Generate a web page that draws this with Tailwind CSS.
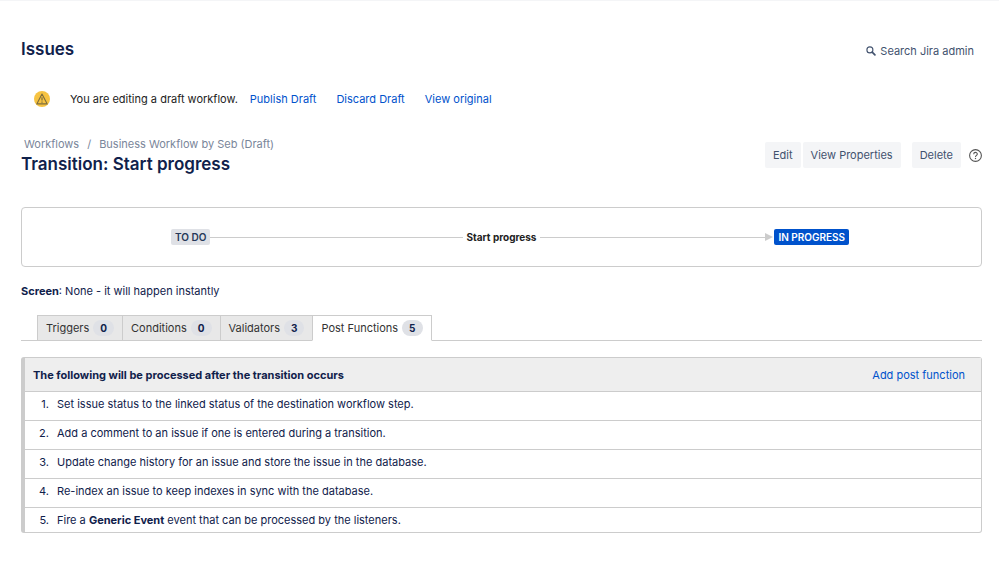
<!DOCTYPE html>
<html lang="en">
  <head>
    <meta charset="UTF-8" />
    <meta name="viewport" content="width=device-width, initial-scale=1.0" />
    <title>Transition: Start progress - Issues</title>
    <script src="https://cdn.jsdelivr.net/npm/@tailwindcss/browser@4"></script>
  </head>
  <body
    class="min-h-screen border-t border-[#f4f5f7] bg-white font-['Inter',sans-serif] text-[11px] leading-4 text-[#10214b]"
  >
    <header class="flex items-end justify-between pt-9 pr-[25px] pl-[21px]">
      <h1 class="text-[17px] leading-6 font-semibold">Issues</h1>
      <button type="button" class="flex items-center gap-1 pb-[2px] text-[#42526e]">
        <svg class="size-[10px]" viewBox="0 0 10 10" fill="none" stroke="currentColor">
          <circle cx="3.9" cy="3.9" r="3" stroke-width="1.1" />
          <path d="M6.2 6.2 8.9 8.9" stroke-width="1.7" stroke-linecap="round" />
        </svg>
        Search Jira admin
      </button>
    </header>

    <main class="pr-[17px] pl-[21px]">
      <!-- Draft notice -->
      <div class="mt-[30px] flex items-center pl-[13px]">
        <svg class="size-4" viewBox="0 0 16 16" fill="none">
          <circle cx="8" cy="8" r="8" fill="#f6c342" />
          <path d="M8 3 13.2 12.9H2.8Z" stroke="#7d6d3c" stroke-width="1.1" stroke-linejoin="round" />
          <path d="M8 6.2V9.6M8 10.6V11.8" stroke="#7d6d3c" stroke-width="1.2" />
        </svg>
        <p class="ml-5 text-[#222222]">You are editing a draft workflow.</p>
        <a href="#publish" class="ml-3 text-[#0052cc]">Publish Draft</a>
        <a href="#discard" class="ml-5 text-[#0052cc]">Discard Draft</a>
        <a href="#original" class="ml-5 text-[#0052cc]">View original</a>
      </div>

      <!-- Page title and actions -->
      <div class="mt-[29px] flex items-center justify-between">
        <div>
          <nav aria-label="Breadcrumb" class="flex gap-2 pl-[3px] text-[#7a869a]">
            <a href="#workflows">Workflows</a>
            <span>/</span>
            <a href="#workflow">Business Workflow by Seb (Draft)</a>
          </nav>
          <h2 class="text-[17px] leading-6 font-semibold">Transition: Start progress</h2>
        </div>
        <div class="flex items-center pb-[2px] text-[#42526e]">
          <button type="button" class="h-[26px] rounded-[2px] bg-[#f4f5f7] px-2">Edit</button>
          <button type="button" class="ml-[2px] h-[26px] rounded-[2px] bg-[#f4f5f7] px-2">
            View Properties
          </button>
          <button type="button" class="ml-[11px] h-[26px] rounded-[2px] bg-[#f4f5f7] px-2">
            Delete
          </button>
          <button type="button" aria-label="Help" class="ml-2 text-[#555555]">
            <svg class="size-[13px]" viewBox="0 0 13 13" fill="none" stroke="currentColor">
              <circle cx="6.5" cy="6.5" r="5.9" stroke-width="1.1" />
              <path d="M4.7 5.2C4.7 2.8 8.3 2.9 8.3 5 8.3 6.4 6.5 6.3 6.5 8" stroke-width="1.1" />
              <path d="M6.5 8.9V10.1" stroke-width="1.2" />
            </svg>
          </button>
        </div>
      </div>

      <!-- Transition diagram -->
      <div
        class="mt-[31px] grid h-[60px] grid-cols-[1fr_auto_1fr] items-center rounded-[4px] border border-[#cccccc] text-[10px]"
      >
        <div class="flex items-center pl-[149px]">
          <span class="rounded-[2px] bg-[#dfe1e6] px-1 font-semibold text-[#253858]">TO DO</span>
          <span class="h-px flex-1 bg-[#cccccc]"></span>
        </div>
        <span class="px-1 font-bold text-[#222222]">Start progress</span>
        <div class="flex items-center pr-[132px]">
          <span class="h-px flex-1 bg-[#cccccc]"></span>
          <svg class="h-2 w-[9px]" viewBox="0 0 9 8" fill="#cccccc">
            <path d="M0 0 8 4 0 8Z" />
          </svg>
          <span class="rounded-[2px] bg-[#0052cc] px-1 font-semibold text-white">IN PROGRESS</span>
        </div>
      </div>

      <p class="mt-4"><strong class="font-bold">Screen</strong>: None - it will happen instantly</p>

      <!-- Tabs -->
      <div role="tablist" class="mt-4 flex border-b border-[#cccccc] pl-4 text-[#333333]">
        <button
          type="button"
          role="tab"
          class="-mb-px flex h-[26px] items-center gap-1 border-y border-l border-[#cccccc] bg-[#e8e8e8] px-2"
        >
          Triggers
          <span class="rounded-full bg-[#dfe1e6] px-[7px] text-[10px] font-bold text-[#10214b]">0</span>
        </button>
        <button
          type="button"
          role="tab"
          class="-mb-px flex h-[26px] items-center gap-1 border-y border-l border-[#cccccc] bg-[#e8e8e8] px-2"
        >
          Conditions
          <span class="rounded-full bg-[#dfe1e6] px-[7px] text-[10px] font-bold text-[#10214b]">0</span>
        </button>
        <button
          type="button"
          role="tab"
          class="-mb-px flex h-[26px] items-center gap-1 border-y border-l border-[#cccccc] bg-[#e8e8e8] px-2"
        >
          Validators
          <span class="rounded-full bg-[#dfe1e6] px-[7px] text-[10px] font-bold text-[#10214b]">3</span>
        </button>
        <button
          type="button"
          role="tab"
          aria-selected="true"
          class="-mb-px flex h-[26px] items-center gap-1 border border-[#cccccc] border-b-white bg-white px-2"
        >
          Post Functions
          <span class="rounded-full bg-[#dfe1e6] px-[7px] text-[10px] font-bold text-[#10214b]">5</span>
        </button>
      </div>

      <!-- Post functions -->
      <section class="mt-4 rounded-[3px] border border-l-4 border-[#cccccc]">
        <div class="flex h-[33px] items-center justify-between bg-[#eeeeee] pr-4 pl-2">
          <h3 class="font-bold">The following will be processed after the transition occurs</h3>
          <a href="#add" class="text-[#0052cc]">Add post function</a>
        </div>
        <ol>
          <li class="flex gap-2 border-t border-[#cccccc] pt-1 pb-2">
            <span class="w-6 text-right">1.</span>
            <span>Set issue status to the linked status of the destination workflow step.</span>
          </li>
          <li class="flex gap-2 border-t border-[#cccccc] pt-1 pb-2">
            <span class="w-6 text-right">2.</span>
            <span>Add a comment to an issue if one is entered during a transition.</span>
          </li>
          <li class="flex gap-2 border-t border-[#cccccc] pt-1 pb-2">
            <span class="w-6 text-right">3.</span>
            <span>Update change history for an issue and store the issue in the database.</span>
          </li>
          <li class="flex gap-2 border-t border-[#cccccc] pt-1 pb-2">
            <span class="w-6 text-right">4.</span>
            <span>Re-index an issue to keep indexes in sync with the database.</span>
          </li>
          <li class="flex gap-2 border-t border-[#cccccc] pt-1 pb-1">
            <span class="w-6 text-right">5.</span>
            <span>Fire a <b class="font-bold">Generic Event</b> event that can be processed by the listeners.</span>
          </li>
        </ol>
      </section>
    </main>
  </body>
</html>
